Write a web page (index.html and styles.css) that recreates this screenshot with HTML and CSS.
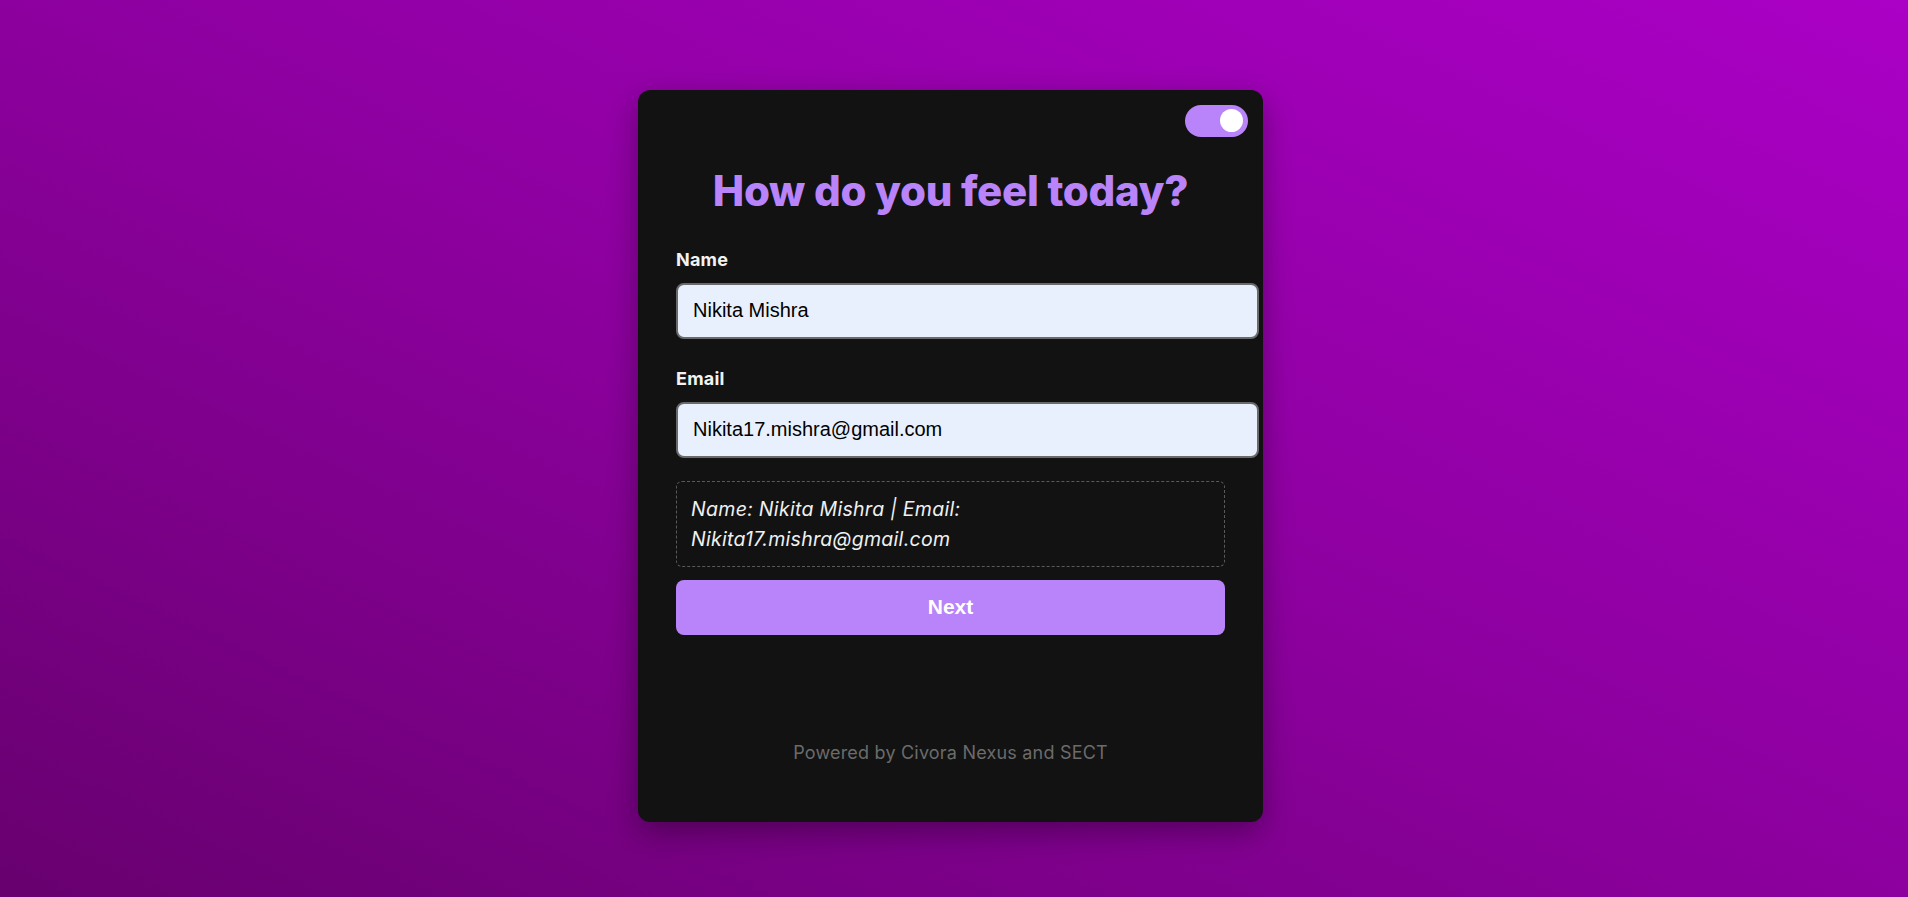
FILE: index.html
```html
<!DOCTYPE html>
<html lang="en">
<head>
<meta charset="utf-8">
<title>How do you feel today?</title>
<link rel="stylesheet" href="styles.css">
</head>
<body>
  <main class="card">
    <label class="toggle" aria-label="Theme toggle">
      <span class="toggle-knob"></span>
    </label>
    <h1 class="title">How do you feel today?</h1>
    <form class="form">
      <div class="field">
        <label class="field-label" for="name">Name</label>
        <input class="field-input" id="name" type="text" value="Nikita Mishra">
      </div>
      <div class="field">
        <label class="field-label" for="email">Email</label>
        <input class="field-input" id="email" type="email" value="Nikita17.mishra@gmail.com">
      </div>
      <div class="summary">Name: Nikita Mishra | Email: Nikita17.mishra@gmail.com</div>
      <button class="next-btn" type="button">Next</button>
    </form>
    <footer class="footer">Powered by Civora Nexus and SECT</footer>
  </main>
</body>
</html>
```

FILE: styles.css
```css
html, body {
  height: 100%;
}
body {
  margin: 0;
  min-height: 100vh;
  display: flex;
  justify-content: center;
  align-items: center;
  padding: 14px 7px 0 0;
  box-sizing: border-box;
  background: linear-gradient(to top right, #68006f 0%, #8d009f 50%, #ab00c6 100%);
  font-family: "Inter", "Noto Sans", sans-serif;
}

.card {
  position: relative;
  width: 625px;
  box-sizing: border-box;
  padding: 39px 38px 57px;
  background: #121212;
  border-radius: 12px;
  box-shadow: 0 10px 30px rgba(0, 0, 0, 0.35);
  display: flex;
  flex-direction: column;
}

.toggle {
  position: absolute;
  top: 15px;
  right: 15px;
  width: 63px;
  height: 32px;
  border-radius: 16px;
  background: #b983f9;
  display: flex;
  align-items: center;
  justify-content: flex-end;
  padding: 0 5px;
  box-sizing: border-box;
}
.toggle-knob {
  width: 23px;
  height: 23px;
  border-radius: 50%;
  background: #ffffff;
}

.title {
  margin: 38px 0 32px;
  text-align: center;
  font-size: 42px;
  line-height: 48px;
  font-weight: 800;
  letter-spacing: -0.3px;
  color: #b983f9;
}

.form {
  display: flex;
  flex-direction: column;
}

.field {
  display: flex;
  flex-direction: column;
  margin-bottom: 27px;
}
.field + .field {
  margin-bottom: 23px;
}

.field-label {
  font-size: 18px;
  line-height: 26px;
  font-weight: 700;
  letter-spacing: 0.2px;
  color: #f2f2f2;
  margin-bottom: 10px;
}

.field-input {
  width: 100%;
  box-sizing: content-box;
  height: 22px;
  padding: 15px;
  border: 2px solid #6a6a6a;
  border-radius: 8px;
  background: #e8f0fe;
  color: #000;
  font-family: "Liberation Sans", Arial, sans-serif;
  font-size: 20px;
  outline: none;
}

.summary {
  border: 1px dashed #5a5a5a;
  border-radius: 6px;
  padding: 12px 14px;
  font-style: italic;
  font-size: 19.5px;
  letter-spacing: 0.3px;
  line-height: 30px;
  color: #f0f0f0;
}

.next-btn {
  margin-top: 13px;
  height: 55px;
  border: none;
  border-radius: 8px;
  background: #b983f9;
  color: #ffffff;
  font-family: "Liberation Sans", Arial, sans-serif;
  font-size: 21px;
  font-weight: 700;
  cursor: pointer;
}

.footer {
  margin-top: 106px;
  text-align: center;
  font-size: 18px;
  letter-spacing: 0.2px;
  line-height: 24px;
  color: #6b6b6b;
}
```
